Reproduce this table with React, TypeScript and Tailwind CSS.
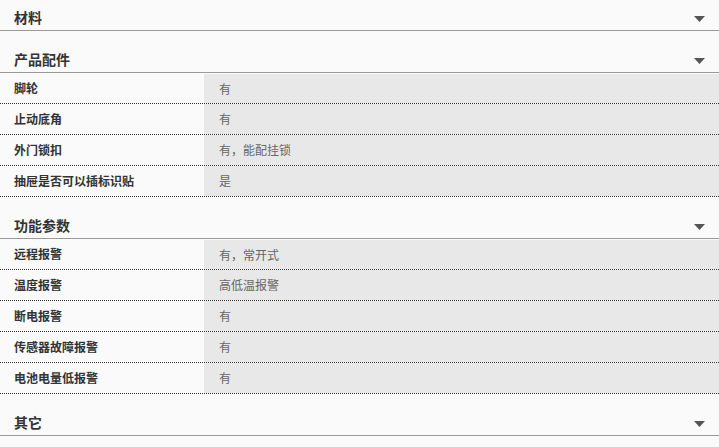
import React from "react";

type Row = [string, string];
const sections: { title: string; rows: Row[] }[] = [
  { title: "材料", rows: [] },
  {
    title: "产品配件",
    rows: [
      ["脚轮", "有"],
      ["止动底角", "有"],
      ["外门锁扣", "有，能配挂锁"],
      ["抽屉是否可以插标识贴", "是"],
    ],
  },
  {
    title: "功能参数",
    rows: [
      ["远程报警", "有，常开式"],
      ["温度报警", "高低温报警"],
      ["断电报警", "有"],
      ["传感器故障报警", "有"],
      ["电池电量低报警", "有"],
    ],
  },
  { title: "其它", rows: [] },
];

function Arrow() {
  return (
    <svg width="11" height="6" viewBox="0 0 11 6" className="absolute right-[14px] top-[16px]">
      <path d="M0 0 H11 L5.5 6 Z" fill="#555" />
    </svg>
  );
}

export default function App() {
  return (
    <div
      className="w-[719px] h-[447px] overflow-hidden bg-[#fafafa]"
      style={{ fontFamily: '"Microsoft YaHei", "Noto Sans CJK SC", sans-serif' }}
    >
      {sections.map((s, i) => (
        <div key={s.title} className={i === 0 ? "" : "mt-[11px]"}>
          <div className="relative h-[31px] border-b border-[#999] pl-[14px] pt-[5px] text-[14px] leading-[25px] font-bold text-[#333]">
            {s.title}
            <Arrow />
          </div>
          {s.rows.length > 0 && (
            <div>
              {s.rows.map((r, j) => (
                <div
                  key={r[0]}
                  className="flex h-[31px] border-b border-dotted border-[#333]"
                >
                  <div className="w-[204px] shrink-0 pl-[14px] text-[12px] leading-[30px] font-bold text-[#333]">
                    {r[0]}
                  </div>
                  <div
                    className={
                      "flex-1 bg-[#e8e8e8] pl-[15px] text-[12px] leading-[29px] text-[#666] " +
                      (j === 0 ? "border-t border-[#fafafa]" : "")
                    }
                  >
                    {r[1]}
                  </div>
                </div>
              ))}
            </div>
          )}
        </div>
      ))}
    </div>
  );
}
